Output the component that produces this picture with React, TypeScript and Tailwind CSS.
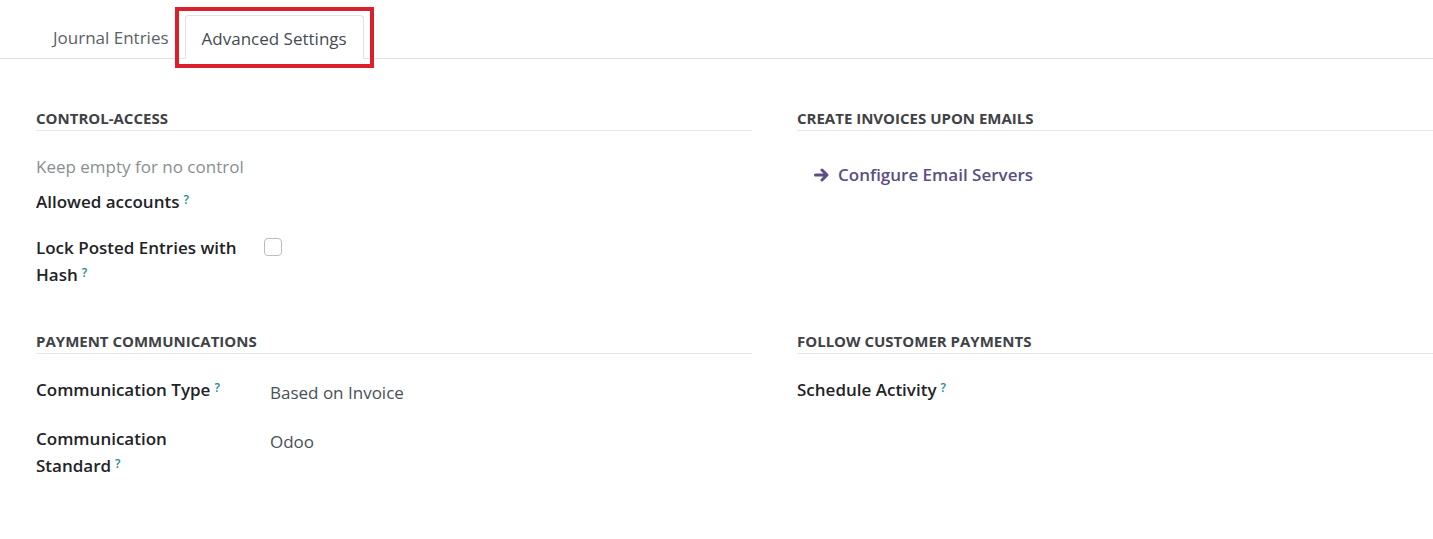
import React from "react";

function Help() {
  return <sup className="ml-[4px] text-[12px] font-semibold text-[#1d8a93] relative -top-[4px]">?</sup>;
}

function SectionTitle({ title }: { title: string }) {
  return (
    <div className="border-b border-[#e5e7eb] pb-[2px]">
      <h3 className="text-[15px] font-bold uppercase text-[#3f4246] leading-[20px]">{title}</h3>
    </div>
  );
}

type RowProps = {
  label: React.ReactNode;
  children?: React.ReactNode;
};

function Row({ label, children }: RowProps) {
  return (
    <div className="flex items-start">
      <div className="w-[228px] shrink-0 text-[17px] font-semibold leading-[27px] text-[#1f2328]">{label}</div>
      <div className="flex-1">{children}</div>
    </div>
  );
}

export default function App() {
  return (
    <div className="relative h-[539px] w-[1433px] overflow-hidden bg-white text-[#212529]" style={{ fontFamily: '"Open Sans", "Liberation Sans", sans-serif' }}>
      {/* tabs */}
      <div className="flex h-[59px] items-end border-b border-[#dee2e6] pl-[35px]">
        <div className="flex h-[44px] items-center pl-[18px] pr-[16px] pt-[3px] text-[17px] text-[#5b5f66]">Journal Entries</div>
        <div className="relative -mb-px flex h-[44px] items-center rounded-t-[4px] border border-b-white border-[#dee2e6] bg-white px-[16px] pt-[3px] text-[17px] text-[#454b52]">
          Advanced Settings
        </div>
      </div>
      {/* red annotation box */}
      <div className="absolute left-[175px] top-[7px] h-[61px] w-[199px] border-[4px] border-[#dc1f2b]" />

      <div className="grid grid-cols-[716px_716px] gap-x-[45px] pl-[36px] pt-[49px]">
        {/* control access */}
        <div>
          <SectionTitle title="Control-Access" />
          <div className="mt-[22px] text-[17px] leading-[27px] text-[#8a8d91]">Keep empty for no control</div>
          <div className="mt-[8px] text-[17px] font-semibold leading-[27px] text-[#1f2328]">
            Allowed accounts
            <Help />
          </div>
          <div className="mt-[19px]">
            <Row
              label={
                <>
                  Lock Posted Entries with
                  <br />
                  Hash
                  <Help />
                </>
              }
            >
              <div className="mt-[4px] h-[18px] w-[18px] rounded-[4px] border border-[#b8bcc2] bg-white" />
            </Row>
          </div>
        </div>

        {/* create invoices */}
        <div>
          <SectionTitle title="Create Invoices upon Emails" />
          <a className="ml-[17px] mt-[30px] flex items-center gap-[8px] text-[17px] font-semibold leading-[27px] text-[#5c4d83]">
            <svg width="16" height="14" viewBox="0 0 16 14" fill="none">
              <path d="M1.5 7h11M8 2l5 5-5 5" stroke="#5c4d83" strokeWidth="3" strokeLinecap="round" strokeLinejoin="round" />
            </svg>
            Configure Email Servers
          </a>
        </div>

        {/* payment communications */}
        <div className="mt-[43px]">
          <SectionTitle title="Payment Communications" />
          <div className="mt-[22px] flex flex-col gap-[19px]">
            <Row
              label={
                <>
                  Communication Type
                  <Help />
                </>
              }
            >
              <div className="mt-[3px] pl-[6px] text-[17px] leading-[27px] text-[#495057]">Based on Invoice</div>
            </Row>
            <Row
              label={
                <>
                  Communication
                  <br />
                  Standard
                  <Help />
                </>
              }
            >
              <div className="mt-[3px] pl-[6px] text-[17px] leading-[27px] text-[#495057]">Odoo</div>
            </Row>
          </div>
        </div>

        {/* follow customer payments */}
        <div className="mt-[43px]">
          <SectionTitle title="Follow Customer Payments" />
          <div className="mt-[22px] text-[17px] font-semibold leading-[27px] text-[#1f2328]">
            Schedule Activity
            <Help />
          </div>
        </div>
      </div>
    </div>
  );
}
